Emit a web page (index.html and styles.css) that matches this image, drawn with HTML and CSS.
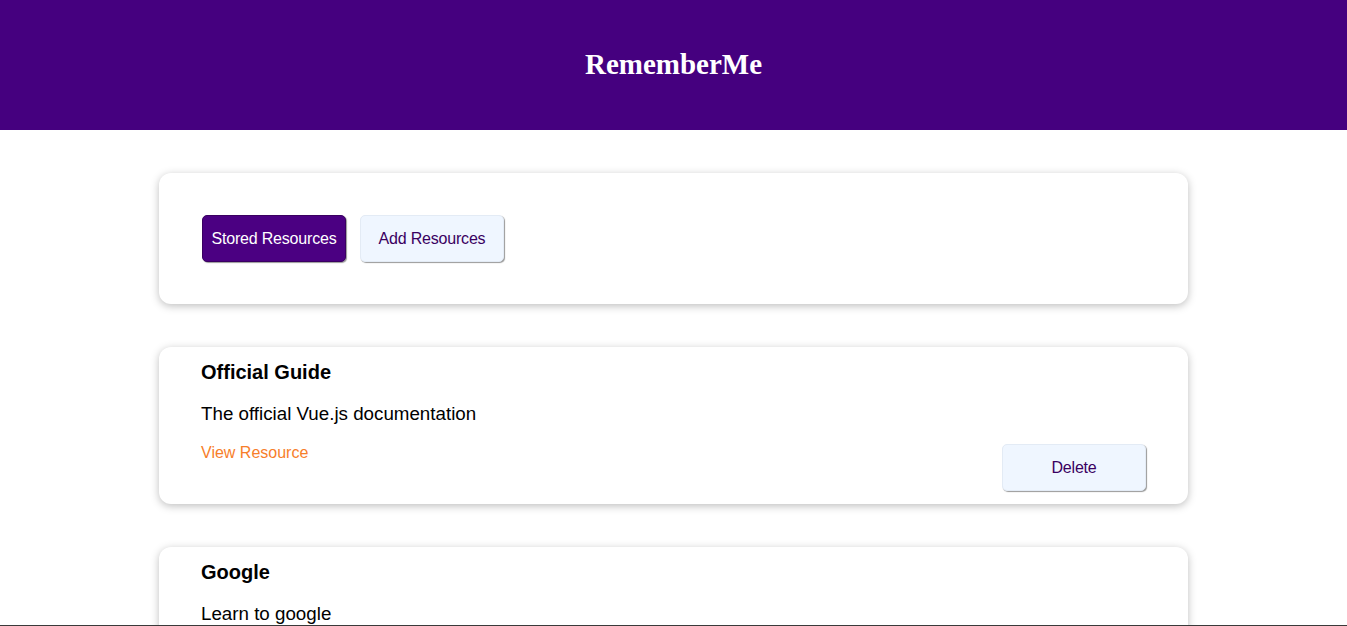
FILE: index.html
```html
<!DOCTYPE html>
<html lang="en">
<head>
<meta charset="utf-8">
<title>RememberMe</title>
<link rel="stylesheet" href="styles.css">
</head>
<body>
<header class="app-header">
  <h1 class="app-title">RememberMe</h1>
</header>
<main class="main">
  <section class="card tabs-card">
    <button class="btn btn-primary">Stored Resources</button>
    <button class="btn btn-flat">Add Resources</button>
  </section>
  <ul class="resource-list">
    <li class="card resource">
      <div class="resource-body">
        <h3 class="resource-title">Official Guide</h3>
        <p class="resource-desc">The official Vue.js documentation</p>
        <a class="resource-link" href="#">View Resource</a>
      </div>
      <button class="btn btn-flat btn-delete">Delete</button>
    </li>
    <li class="card resource">
      <div class="resource-body">
        <h3 class="resource-title">Google</h3>
        <p class="resource-desc">Learn to google</p>
        <a class="resource-link" href="#">View Resource</a>
      </div>
      <button class="btn btn-flat btn-delete">Delete</button>
    </li>
  </ul>
</main>
<div class="window-edge"></div>
</body>
</html>
```
FILE: styles.css
```css
html, body {
  margin: 0;
  padding: 0;
  background: #ffffff;
  font-family: "Liberation Sans", Arial, sans-serif;
  color: #000;
}

.app-header {
  height: 130px;
  box-sizing: border-box;
  padding-bottom: 2px;
  background: #45007f;
  display: flex;
  align-items: center;
  justify-content: center;
}

.app-title {
  margin: 0;
  font-family: "Liberation Serif", "Times New Roman", serif;
  font-size: 29px;
  font-weight: bold;
  color: #ffffff;
}

.main {
  width: 1029px;
  margin: 43px auto 0;
}

.card {
  background: #fff;
  border-radius: 12px;
  box-shadow: 0 2px 8px rgba(0, 0, 0, 0.26);
}

.tabs-card {
  padding: 42px 43px;
  display: flex;
  gap: 14px;
}

.btn {
  width: 144px;
  height: 47px;
  font-family: "Liberation Sans", Arial, sans-serif;
  font-size: 16px;
  letter-spacing: -0.2px;
  white-space: nowrap;
  border-radius: 5px;
  border: none;
  cursor: pointer;
  padding: 0;
  box-shadow: 1px 1px 1px rgba(0, 0, 0, 0.4);
}

.btn-primary {
  background: #4b0082;
  color: #fff;
  border: 1px solid #3a0061;
}

.btn-flat {
  background: #eff6ff;
  color: #3a0061;
  border: 1px solid #e3ebf5;
}

.btn-delete {
  margin-bottom: 1px;
}

.resource-list {
  list-style: none;
  margin: 43px 0 0;
  padding: 0;
  display: flex;
  flex-direction: column;
  gap: 43px;
}

.resource {
  display: flex;
  align-items: flex-end;
  justify-content: space-between;
  padding: 14px 42px 12px 42px;
}

.resource-body {
  display: flex;
  flex-direction: column;
  align-items: flex-start;
}

.resource-title {
  margin: 0;
  font-size: 20px;
  line-height: 23px;
  font-weight: bold;
}

.resource-desc {
  margin: 19px 0 0;
  font-size: 18.75px;
  line-height: 22px;
}

.resource-link {
  margin: 19px 0 30px;
  font-size: 16px;
  line-height: 18px;
  color: #f77e2a;
  text-decoration: none;
}

.window-edge {
  position: fixed;
  left: 0;
  right: 0;
  bottom: 0;
  height: 1px;
  background: #3a3a3a;
}
```
